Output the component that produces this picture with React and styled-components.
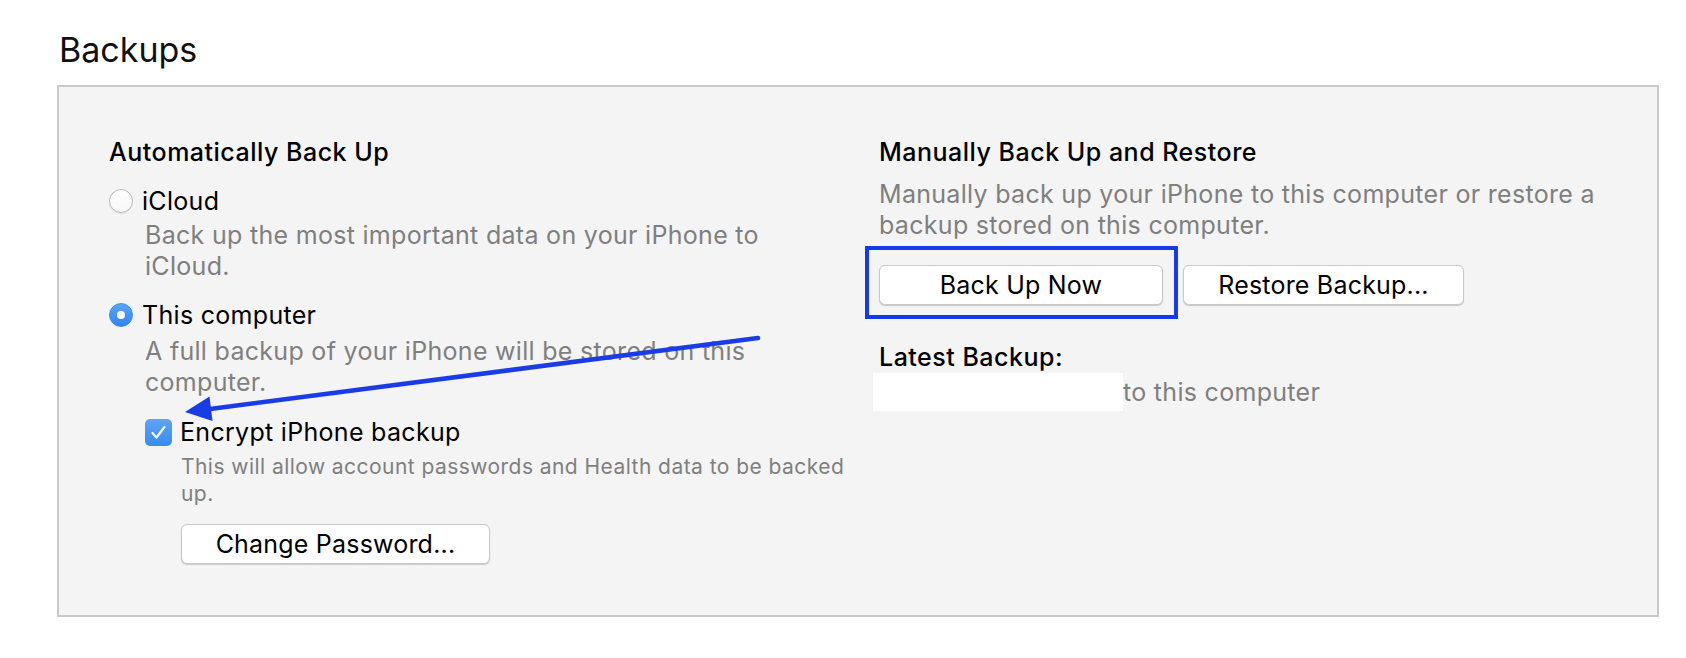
import React from "react";
import styled, { createGlobalStyle } from "styled-components";

const GlobalStyle = createGlobalStyle`
  html, body {
    margin: 0;
    padding: 0;
    background: #fff;
  }
  body {
    font-family: Inter, "Liberation Sans", sans-serif;
    -webkit-font-smoothing: antialiased;
  }
`;

const Page = styled.div`
  position: relative;
  width: 1686px;
  height: 658px;
  box-sizing: border-box;
  padding: 27px 27px 0 57px;
`;

const Title = styled.h1`
  margin: 0 0 12px 2px;
  font-size: 34px;
  font-weight: 400;
  line-height: 46px;
  color: #111;
`;

const Panel = styled.section`
  height: 532px;
  box-sizing: border-box;
  border: 2px solid #c9c9c9;
  background: #f4f4f4;
  display: grid;
  grid-template-columns: 770px 1fr;
  align-items: start;
  padding: 49px 0 0 50px;
`;

const Column = styled.div`
  display: flex;
  flex-direction: column;
`;

const Heading = styled.div`
  font-size: 25px;
  font-weight: 500;
  line-height: 32px;
  letter-spacing: 0.5px;
  color: #000;
  margin-top: ${(p) => p.$top || 0}px;
`;

const OptionRow = styled.label`
  display: flex;
  align-items: center;
  gap: ${(p) => p.$gap || 9}px;
  margin-top: ${(p) => p.$top || 0}px;
  font-size: 25px;
  line-height: 34px;
  letter-spacing: 0.3px;
  color: #000;
`;

const Radio = styled.span`
  width: 24px;
  height: 24px;
  box-sizing: border-box;
  border-radius: 50%;
  flex: none;
  display: flex;
  align-items: center;
  justify-content: center;
  border: 1px solid ${(p) => (p.$on ? "#3a8ef3" : "#b9b9b9")};
  background: ${(p) =>
    p.$on ? "linear-gradient(#5aa5f7, #2f86f1)" : "linear-gradient(#fff, #f7f7f7)"};
  box-shadow: ${(p) => (p.$on ? "none" : "0 1px 1px rgba(0,0,0,0.08)")};

  &::after {
    content: "";
    display: ${(p) => (p.$on ? "block" : "none")};
    width: 8px;
    height: 8px;
    border-radius: 50%;
    background: #fff;
  }
`;

const Checkbox = styled.span`
  width: 27px;
  height: 27px;
  flex: none;
  border-radius: 5px;
  background: linear-gradient(#5aa5f7, #3a8bf0);
  display: flex;
  align-items: center;
  justify-content: center;
`;

const Desc = styled.p`
  margin: ${(p) => p.$top || 0}px 0 0 ${(p) => p.$indent || 0}px;
  font-size: ${(p) => (p.$small ? 21 : 25)}px;
  line-height: ${(p) => (p.$small ? 27 : 31)}px;
  letter-spacing: ${(p) => (p.$small ? 0.45 : 0.3)}px;
  color: #7f7f7f;
  max-width: ${(p) => p.$max || 640}px;
`;

const Nested = styled.div`
  margin-left: 36px;
  display: flex;
  flex-direction: column;
`;

const Button = styled.button`
  width: ${(p) => p.$w}px;
  height: 40px;
  box-sizing: border-box;
  border: 1px solid #c8c8c8;
  border-radius: 6px;
  background: #fff;
  box-shadow: 0 1px 1px rgba(0, 0, 0, 0.18);
  font-family: inherit;
  font-size: 25px;
  letter-spacing: 0.2px;
  color: #000;
  padding: 0;
  margin-top: ${(p) => p.$top || 0}px;
  margin-left: ${(p) => p.$left || 0}px;
`;

const ButtonRow = styled.div`
  display: flex;
  gap: 20px;
  margin-top: 24px;
`;

const Highlight = styled.div`
  position: relative;

  &::after {
    content: "";
    position: absolute;
    top: -19px;
    left: -14px;
    right: -15px;
    bottom: -14px;
    border: 4px solid #1739ee;
    pointer-events: none;
  }
`;

const LatestLine = styled.div`
  display: flex;
  align-items: center;
  font-size: 25px;
  line-height: 34px;
  letter-spacing: 0.3px;
  color: #7f7f7f;
`;

const Redacted = styled.span`
  display: inline-block;
  width: 250px;
  height: 38px;
  margin-left: -6px;
  background: #fff;
`;

const Overlay = styled.svg`
  position: absolute;
  top: 0;
  left: 0;
  pointer-events: none;
`;

export default function App() {
  return (
    <>
      <GlobalStyle />
      <Page>
        <Title>Backups</Title>
        <Panel>
          <Column>
            <Heading>Automatically Back Up</Heading>
            <OptionRow $top={16}>
              <Radio />
              iCloud
            </OptionRow>
            <Desc $indent={36} $top={2}>
              Back up the most important data on your iPhone to iCloud.
            </Desc>
            <OptionRow $top={16}>
              <Radio $on />
              This computer
            </OptionRow>
            <Desc $indent={36} $top={4}>
              A full backup of your iPhone will be stored on this computer.
            </Desc>
            <Nested>
              <OptionRow $top={17} $gap={8}>
                <Checkbox>
                  <svg width="17" height="15" viewBox="0 0 17 15">
                    <path
                      d="M2.5 8 L6.5 12.5 L14.5 2"
                      fill="none"
                      stroke="#fff"
                      strokeWidth="2.2"
                      strokeLinecap="round"
                      strokeLinejoin="round"
                    />
                  </svg>
                </Checkbox>
                Encrypt iPhone backup
              </OptionRow>
              <Desc $small $indent={36} $top={4} $max={690}>
                This will allow account passwords and Health data to be backed up.
              </Desc>
              <Button $w={309} $top={17} $left={36}>
                Change Password...
              </Button>
            </Nested>
          </Column>
          <Column>
            <Heading>Manually Back Up and Restore</Heading>
            <Desc $top={11} $max={740}>
              Manually back up your iPhone to this computer or restore a backup
              stored on this computer.
            </Desc>
            <ButtonRow>
              <Highlight>
                <Button $w={284}>Back Up Now</Button>
              </Highlight>
              <Button $w={281}>Restore Backup...</Button>
            </ButtonRow>
            <Heading $top={36}>Latest Backup:</Heading>
            <LatestLine>
              <Redacted />
              to this computer
            </LatestLine>
          </Column>
        </Panel>
        <Overlay width="1686" height="658" viewBox="0 0 1686 658">
          <line
            x1="758"
            y1="338"
            x2="210"
            y2="409"
            stroke="#1a3ce6"
            strokeWidth="4.5"
            strokeLinecap="round"
          />
          <polygon points="185,412 212.5,421 209.5,396.5" fill="#1a3ce6" />
        </Overlay>
      </Page>
    </>
  );
}
